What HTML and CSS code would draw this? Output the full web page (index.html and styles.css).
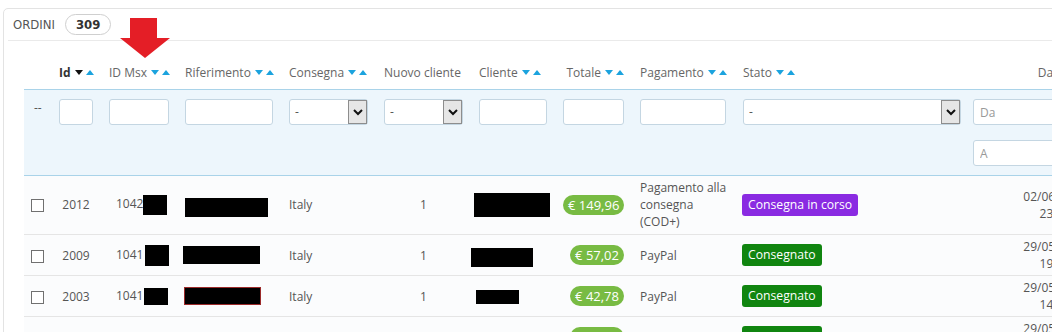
FILE: index.html
```html
<!DOCTYPE html>
<html lang="it">
  <head>
    <meta charset="UTF-8" />
    <title>Ordini</title>
    <link rel="stylesheet" href="styles.css">
  </head>
  <body>
    <div class="panel">
      <div class="panel-heading">
        <span class="panel-title">ORDINI</span>
        <span class="count">309</span>
      </div>

      <table class="orders">
        <colgroup>
          <col class="c-check">
          <col class="c-id">
          <col class="c-msx">
          <col class="c-ref">
          <col class="c-country">
          <col class="c-new">
          <col class="c-customer">
          <col class="c-total">
          <col class="c-payment">
          <col class="c-state">
          <col class="c-date">
        </colgroup>
        <thead>
          <tr class="titles">
            <th></th>
            <th><b>Id</b><svg class="sort sort-active" viewBox="0 0 19 5"><polygon class="down" points="0,0 8,0 4,5"/><polygon class="up" points="11,5 19,5 15,0"/></svg></th>
            <th>ID Msx<svg class="sort" viewBox="0 0 19 5"><polygon points="0,0 8,0 4,5"/><polygon points="11,5 19,5 15,0"/></svg></th>
            <th>Riferimento<svg class="sort" viewBox="0 0 19 5"><polygon points="0,0 8,0 4,5"/><polygon points="11,5 19,5 15,0"/></svg></th>
            <th>Consegna<svg class="sort" viewBox="0 0 19 5"><polygon points="0,0 8,0 4,5"/><polygon points="11,5 19,5 15,0"/></svg></th>
            <th>Nuovo cliente</th>
            <th>Cliente<svg class="sort" viewBox="0 0 19 5"><polygon points="0,0 8,0 4,5"/><polygon points="11,5 19,5 15,0"/></svg></th>
            <th class="right">Totale<svg class="sort" viewBox="0 0 19 5"><polygon points="0,0 8,0 4,5"/><polygon points="11,5 19,5 15,0"/></svg></th>
            <th>Pagamento<svg class="sort" viewBox="0 0 19 5"><polygon points="0,0 8,0 4,5"/><polygon points="11,5 19,5 15,0"/></svg></th>
            <th class="state">Stato<svg class="sort" viewBox="0 0 19 5"><polygon points="0,0 8,0 4,5"/><polygon points="11,5 19,5 15,0"/></svg></th>
            <th class="right">Data<svg class="sort" viewBox="0 0 19 5"><polygon points="0,0 8,0 4,5"/><polygon points="11,5 19,5 15,0"/></svg></th>
          </tr>
          <tr class="filters">
            <th><span class="dashes">--</span></th>
            <th><input class="filter-input" type="text"></th>
            <th><input class="filter-input" type="text"></th>
            <th><input class="filter-input" type="text"></th>
            <th>
              <div class="filter-select"><span class="value">-</span><span class="arrow"><svg viewBox="0 0 10 7"><polyline points="1,1 5,5 9,1"/></svg></span></div>
            </th>
            <th>
              <div class="filter-select"><span class="value">-</span><span class="arrow"><svg viewBox="0 0 10 7"><polyline points="1,1 5,5 9,1"/></svg></span></div>
            </th>
            <th><input class="filter-input" type="text"></th>
            <th><input class="filter-input" type="text"></th>
            <th><input class="filter-input" type="text"></th>
            <th class="state">
              <div class="filter-select"><span class="value">-</span><span class="arrow"><svg viewBox="0 0 10 7"><polyline points="1,1 5,5 9,1"/></svg></span></div>
            </th>
            <th>
              <input class="filter-input" type="text" placeholder="Da">
              <input class="filter-input" type="text" placeholder="A">
            </th>
          </tr>
        </thead>
        <tbody>
          <tr class="first">
            <td><span class="check"></span></td>
            <td class="center">2012</td>
            <td class="msx">1042<span class="redact msx-a"></span></td>
            <td><span class="redact ref-a"></span></td>
            <td>Italy</td>
            <td class="center">1</td>
            <td><span class="redact cli-a"></span></td>
            <td class="right"><span class="price">€ 149,96</span></td>
            <td>Pagamento alla<br>consegna<br>(COD+)</td>
            <td><span class="status shipping">Consegna in corso</span></td>
            <td class="right">02/06/2020<br>23:14:07</td>
          </tr>
          <tr>
            <td><span class="check"></span></td>
            <td class="center">2009</td>
            <td class="msx">1041<span class="redact msx-b"></span></td>
            <td><span class="redact ref-b"></span></td>
            <td>Italy</td>
            <td class="center">1</td>
            <td><span class="redact cli-b"></span></td>
            <td class="right"><span class="price">€ 57,02</span></td>
            <td>PayPal</td>
            <td><span class="status delivered">Consegnato</span></td>
            <td class="right">29/05/2020<br>19:42:51</td>
          </tr>
          <tr>
            <td><span class="check"></span></td>
            <td class="center">2003</td>
            <td class="msx">1041<span class="redact msx-c"></span></td>
            <td><span class="redact ref-c"></span></td>
            <td>Italy</td>
            <td class="center">1</td>
            <td><span class="redact cli-c"></span></td>
            <td class="right"><span class="price">€ 42,78</span></td>
            <td>PayPal</td>
            <td><span class="status delivered">Consegnato</span></td>
            <td class="right">29/05/2020<br>14:05:33</td>
          </tr>
          <tr>
            <td><span class="check"></span></td>
            <td class="center">2001</td>
            <td class="msx">1041</td>
            <td></td>
            <td>Italy</td>
            <td class="center">1</td>
            <td></td>
            <td class="right"><span class="price">€ 39,90</span></td>
            <td>PayPal</td>
            <td><span class="status delivered">Consegnato</span></td>
            <td class="right">29/05/2020<br>10:21:09</td>
          </tr>
        </tbody>
      </table>
    </div>

    <!-- red marker pointing at the ID Msx column -->
    <svg class="marker" viewBox="0 0 50 40">
      <rect x="10" y="0" width="27" height="20"/>
      <polygon points="0,20 50,20 25,40"/>
    </svg>
  </body>
</html>
```

FILE: styles.css
```css
html,
body {
  overflow: hidden;
}

body {
  margin: 0;
  position: relative;
  background: #fff;
  font-family: "Open Sans", sans-serif;
}

/* Panel */
.panel {
  width: 1200px;
  margin: 8px 0 0 3px;
  padding: 0 0 40px 20px;
  border: 1px solid #e3e3e3;
  border-radius: 5px 0 0 0;
  background: #fff;
}

.panel-heading {
  display: flex;
  align-items: center;
  gap: 10px;
  height: 31px;
  margin-left: -16px;
  padding-left: 5px;
  border-bottom: 1px solid #eaeaea;
  font-family: "DejaVu Sans Condensed", "DejaVu Sans", sans-serif;
  font-stretch: condensed;
  font-size: 13px;
  color: #555;
}

.count {
  display: inline-flex;
  align-items: center;
  box-sizing: border-box;
  height: 21px;
  padding: 0 10px;
  border: 1px solid #cfcfcf;
  border-radius: 11px;
  font-weight: bold;
  color: #333;
}

/* Table */
.orders {
  width: 1079px;
  table-layout: fixed;
  border-collapse: collapse;
  font-size: 12px;
  color: #555;
}

.c-check { width: 35px; }
.c-id { width: 50px; }
.c-msx { width: 76px; }
.c-ref { width: 104px; }
.c-country { width: 95px; }
.c-new { width: 95px; }
.c-customer { width: 84px; }
.c-total { width: 77px; }
.c-payment { width: 102px; }
.c-state { width: 231px; }
.c-date { width: 130px; }

.orders th,
.orders td {
  padding: 0 16px 0 0;
  text-align: left;
  white-space: nowrap;
}

.orders .right {
  text-align: right;
}

.orders .center {
  text-align: center;
}

.titles th {
  padding-top: 23px;
  padding-bottom: 8px;
  line-height: 17px;
  font-weight: normal;
  color: #666;
  border-bottom: 1px solid #a9d3e9;
}

.titles th.state {
  padding-left: 1px;
}

.titles b {
  color: #333;
}

.sort {
  width: 19px;
  height: 5px;
  margin-left: 4px;
  vertical-align: 2px;
  fill: #1ba3de;
}

.sort-active .down {
  fill: #111;
}

.filters th {
  padding-top: 9px;
  padding-bottom: 9px;
  vertical-align: top;
  font-weight: normal;
  background: #edf6fc;
  border-bottom: 1px solid #a9d3e9;
}

.filters th.state {
  padding-left: 1px;
  padding-right: 12px;
}

.dashes {
  display: block;
  padding-left: 10px;
  line-height: 18px;
}

.filter-input {
  display: block;
  box-sizing: border-box;
  width: 100%;
  height: 26px;
  padding: 0 6px;
  border: 1px solid #c4d6e2;
  border-radius: 3px;
  background: #fff;
  font: 12px "Open Sans", sans-serif;
  color: #555;
}

.filter-input::placeholder {
  color: #999;
}

.filter-input + .filter-input {
  margin-top: 15px;
}

.filter-select {
  display: flex;
  box-sizing: border-box;
  height: 26px;
  border: 1px solid #c4d6e2;
  border-radius: 3px;
  background: #fff;
}

.filter-select .value {
  flex: 1;
  padding-left: 5px;
  line-height: 24px;
}

.filter-select .arrow {
  display: flex;
  align-items: center;
  justify-content: center;
  box-sizing: border-box;
  width: 19px;
  border: 1px solid #8d8d8d;
  background: #e6e6e6;
}

.filter-select svg {
  width: 10px;
  height: 7px;
  fill: none;
  stroke: #111;
  stroke-width: 2;
}

/* Rows */
.orders tbody td {
  padding-top: 3px;
  padding-bottom: 3px;
  line-height: 17px;
  vertical-align: middle;
  background: #fbfcfd;
  border-bottom: 1px solid #e5e5e5;
}

.orders tbody tr.first td {
  padding-bottom: 4px;
}

.orders td.msx {
  padding-left: 7px;
}

.check {
  display: inline-block;
  box-sizing: border-box;
  width: 13px;
  height: 13px;
  margin-left: 7px;
  vertical-align: middle;
  border: 1px solid #707070;
  background: #fff;
}

.redact {
  display: inline-block;
  vertical-align: middle;
  background: #000;
}

.msx-a { width: 24px; height: 20px; }
.msx-b { width: 24px; height: 21px; margin-left: 2px; }
.msx-c { width: 24px; height: 17px; margin-left: 1px; }

.ref-a { width: 83px; height: 19px; margin-top: 6px; }
.ref-b { width: 77px; height: 18px; margin-left: -2px; }
.ref-c {
  box-sizing: border-box;
  width: 77px;
  height: 18px;
  margin-left: -1px;
  border: 1px solid #9b2a2a;
}

.cli-a { width: 76px; height: 24px; margin-left: -5px; }
.cli-b { width: 62px; height: 19px; margin-left: -8px; margin-top: 4px; }
.cli-c { width: 43px; height: 14px; margin-left: -3px; }

.price {
  display: inline-block;
  padding: 0 5px;
  line-height: 20px;
  border-radius: 10px;
  background: #78bb43;
  color: #fff;
  font-size: 13px;
}

.status {
  display: inline-block;
  padding: 2px 6px;
  line-height: 18px;
  border-radius: 3px;
  color: #fff;
  font-size: 12.2px;
}

.status.shipping {
  background: #8a2be2;
}

.status.delivered {
  background: #108510;
}

/* Marker */
.marker {
  position: absolute;
  left: 120px;
  top: 18px;
  width: 50px;
  height: 40px;
  fill: #e41e26;
}
```
